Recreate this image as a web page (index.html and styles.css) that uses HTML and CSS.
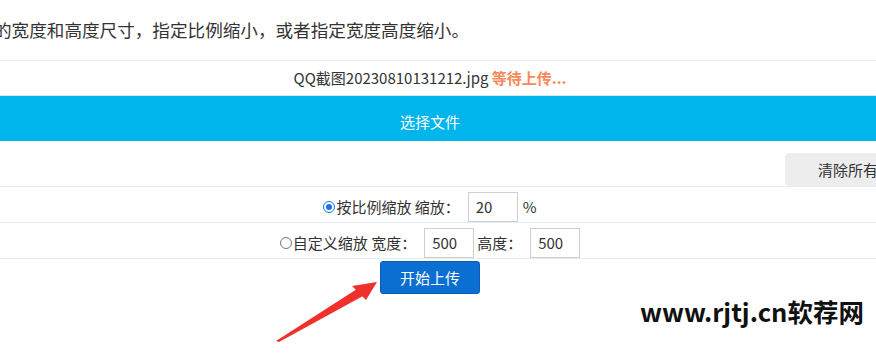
FILE: index.html
```html
<!DOCTYPE html>
<html lang="zh-CN">
<head>
<meta charset="utf-8">
<title>图片缩放上传</title>
<link rel="stylesheet" href="styles.css">
</head>
<body>
<p class="intro">的宽度和高度尺寸，指定比例缩小，或者指定宽度高度缩小。</p>
<div class="wrap">
  <div class="file-row">QQ截图20230810131212.jpg <span class="status">等待上传...</span></div>
  <div class="select-bar">选择文件</div>
  <div class="clear-row"><span class="clear-btn">清除所有上传文件</span></div>
  <div class="opt-row">
    <span class="radio checked"></span><span>按比例缩放 缩放：</span>
    <span class="field">20</span><span class="unit">%</span>
  </div>
  <div class="opt-row">
    <span class="radio"></span><span>自定义缩放 宽度：</span>
    <span class="field">500</span><span class="label2">高度：</span>
    <span class="field">500</span>
  </div>
  <div class="upload-row"><span class="upload-btn">开始上传</span></div>
</div>
<svg class="arrow" width="120" height="80" viewBox="270 270 120 80">
  <polygon points="276,341 279,342 363,296 357,289" fill="#f0302b"/>
  <polygon points="377,282 352,286 366,300" fill="#f0302b"/>
</svg>
<div class="watermark">www.rjtj.cn软荐网</div>
</body>
</html>
```
FILE: styles.css
```css
html, body {
  margin: 0;
  padding: 0;
}
body {
  width: 876px;
  height: 356px;
  overflow: hidden;
  position: relative;
  background: #fff;
  color: #333;
  font-family: "Noto Sans CJK SC", "Noto Sans", sans-serif;
}
.intro {
  margin: 0 0 0 -6px;
  height: 60px;
  line-height: 60px;
  font-size: 17.6px;
  white-space: nowrap;
  overflow: hidden;
}
.wrap {
  width: 1060px;
  margin-left: -100px;
}
.file-row {
  border-top: 1px solid #e4edf2;
  border-bottom: 1px solid #dfe6ea;
  height: 34px;
  line-height: 34px;
  text-align: center;
  font-size: 15px;
  color: #333;
}
.status {
  color: #f7895a;
  font-weight: bold;
}
.select-bar {
  height: 38px;
  padding-top: 7px;
  line-height: 38px;
  background: #00b5ec;
  color: #fff;
  text-align: center;
  font-size: 15px;
}
.clear-row {
  height: 45px;
  border-bottom: 1px solid #e4edf1;
  display: flex;
  justify-content: flex-end;
  align-items: flex-start;
}
.clear-btn {
  margin-top: 12px;
  margin-right: 20px;
  width: 122px;
  padding-left: 33px;
  height: 33px;
  line-height: 33px;
  background: #ededed;
  border-radius: 4px;
  font-size: 15px;
  white-space: nowrap;
  overflow: hidden;
}
.opt-row {
  height: 31px;
  padding-top: 4px;
  border-bottom: 1px solid #e4edf1;
  display: flex;
  justify-content: center;
  align-items: center;
  font-size: 15px;
  white-space: nowrap;
}
.radio {
  border-radius: 50%;
  border: 1px solid #767676;
  box-sizing: border-box;
  width: 12px;
  height: 12px;
  margin-right: 1px;
  position: relative;
}
.radio.checked {
  border-color: #1a73e8;
  background: #fff;
}
.radio.checked::after {
  content: "";
  position: absolute;
  left: 2px;
  top: 2px;
  width: 6px;
  height: 6px;
  border-radius: 50%;
  background: #1a73e8;
}
.field {
  margin-left: 8px;
  width: 50px;
  height: 30px;
  box-sizing: border-box;
  border: 1px solid #cfcfcf;
  padding-left: 7px;
  line-height: 28px;
  font-size: 15px;
  color: #333;
}
.unit {
  margin-left: 5px;
}
.label2 {
  margin-left: 3px;
}
.upload-row {
  display: flex;
  justify-content: center;
  padding-top: 2px;
}
.upload-btn {
  width: 100px;
  height: 33px;
  box-sizing: border-box;
  line-height: 31px;
  text-align: center;
  background: #0b6fd2;
  border: 1px solid #0a5cb5;
  border-radius: 3px;
  color: #fff;
  font-size: 15px;
}
.arrow {
  position: absolute;
  left: 270px;
  top: 270px;
}
.watermark {
  position: absolute;
  left: 640px;
  top: 294px;
  font-size: 25.5px;
  font-weight: bold;
  color: #111;
  line-height: 34px;
  white-space: nowrap;
  font-family: "Noto Sans CJK SC", sans-serif;
}
```
